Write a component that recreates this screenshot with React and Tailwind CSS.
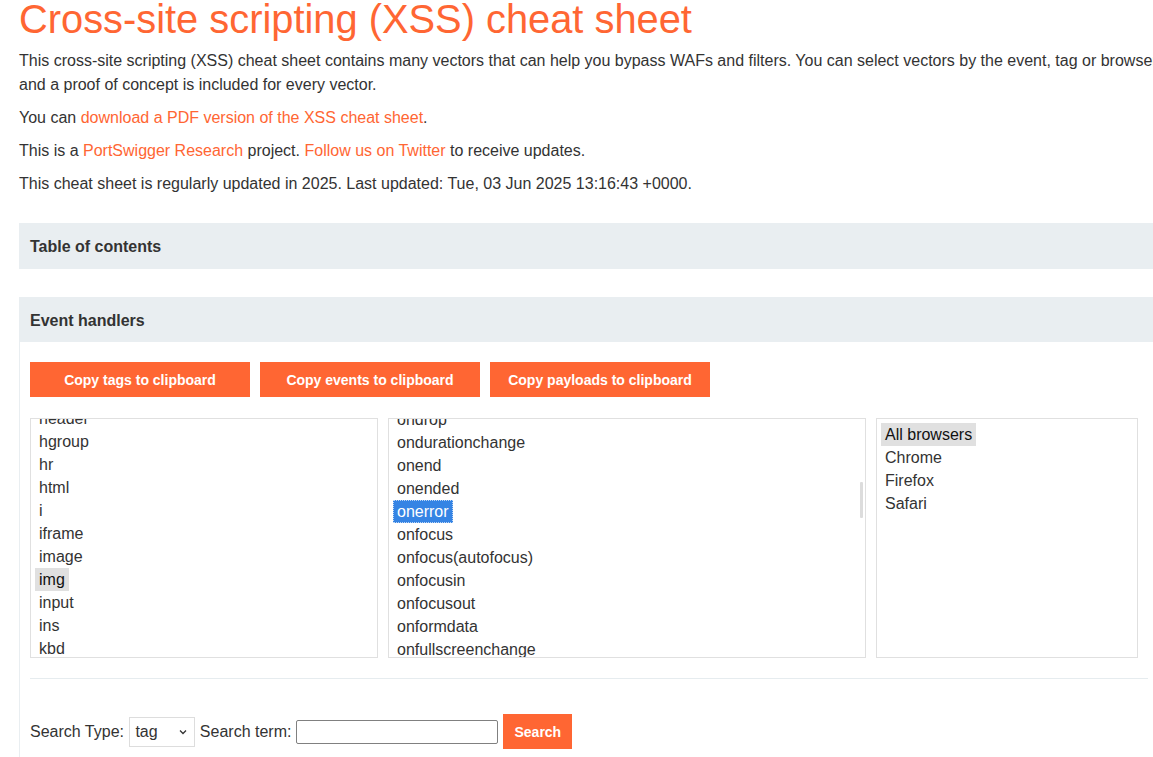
import React from "react";

const font = { fontFamily: '"Liberation Sans", Arial, sans-serif' };

function ListBox({ width, items, selected, selectedStyle, offsetClass, scrollbar }) {
  return (
    <div
      className={`relative h-[240px] ${width} border border-[#e0e0e0] overflow-hidden bg-white shrink-0`}
    >
      <div className={`${offsetClass} px-[4px]`}>
        {items.map((it, i) => (
          <div key={it} className="h-[23px] leading-[23px] text-[16px] whitespace-nowrap">
            {i === selected ? (
              selectedStyle === "blue" ? (
                <span className="inline-block px-[4px] bg-[#3584e4] text-white outline-1 outline-dotted outline-[#bcd6f5] -outline-offset-1">
                  {it}
                </span>
              ) : (
                <span className="inline-block px-[4px] bg-[#e0e0e0] text-[#111]">{it}</span>
              )
            ) : (
              <span className="inline-block px-[4px] text-[#333]">{it}</span>
            )}
          </div>
        ))}
      </div>
      {scrollbar && (
        <div className="absolute right-[2px] top-[63px] w-[3px] h-[36px] bg-[#dcdcdc] rounded-[1px]" />
      )}
    </div>
  );
}

function OrangeButton({ children }) {
  return (
    <button className="w-[220px] h-[35px] pt-[2px] bg-[#ff6633] text-white text-[14px] font-bold flex items-center justify-center">
      {children}
    </button>
  );
}

export default function App() {
  const tags = ["header", "hgroup", "hr", "html", "i", "iframe", "image", "img", "input", "ins", "kbd", "keygen"];
  const events = [
    "ondrop",
    "ondurationchange",
    "onend",
    "onended",
    "onerror",
    "onfocus",
    "onfocus(autofocus)",
    "onfocusin",
    "onfocusout",
    "onformdata",
    "onfullscreenchange",
    "onhashchange",
  ];
  const browsers = ["All browsers", "Chrome", "Firefox", "Safari"];

  return (
    <div className="w-[1153px] h-[757px] overflow-hidden bg-white text-[#333]" style={font}>
      <div className="w-[1159px] pl-[19px]">
        <h1 className="text-[39.85px] leading-[38px] text-[#ff6633] font-normal whitespace-nowrap">
          Cross-site scripting (XSS) cheat sheet
        </h1>
        <div className="mt-[11px] text-[16px] leading-[24px] w-[1140px]">
          <p className="mb-[9px]">
            This cross-site scripting (XSS) cheat sheet contains many vectors that can help you bypass WAFs and
            filters. You can select vectors by the event, tag or browser and a proof of concept is included for
            every vector.
          </p>
          <p className="mb-[9px]">
            You can <a className="text-[#ff6633]">download a PDF version of the XSS cheat sheet</a>.
          </p>
          <p className="mb-[9px]">
            This is a <a className="text-[#ff6633]">PortSwigger Research</a> project.{" "}
            <a className="text-[#ff6633]">Follow us on Twitter</a> to receive updates.
          </p>
          <p>This cheat sheet is regularly updated in 2025. Last updated: Tue, 03 Jun 2025 13:16:43 +0000.</p>
        </div>

        <div className="mt-[27px] w-[1140px] h-[46px] pt-[2px] bg-[#e9eef1] flex items-center px-[11px] text-[16px] font-bold">
          Table of contents
        </div>

        <div className="mt-[28px] w-[1140px]">
          <div className="h-[45px] pt-[2px] bg-[#e9eef1] flex items-center px-[11px] text-[16px] font-bold">
            Event handlers
          </div>
          <div className="border-l border-r border-[#e9eef1] px-[10px] pt-[20px] pb-[20px]">
            <div className="flex gap-[10px]">
              <OrangeButton>Copy tags to clipboard</OrangeButton>
              <OrangeButton>Copy events to clipboard</OrangeButton>
              <OrangeButton>Copy payloads to clipboard</OrangeButton>
            </div>
            <div className="mt-[21px] flex gap-[10px]">
              <ListBox width="w-[348px]" items={tags} selected={7} selectedStyle="gray" offsetClass="-mt-[12px]" />
              <ListBox
                width="w-[478px]"
                items={events}
                selected={4}
                selectedStyle="blue"
                offsetClass="-mt-[11px]"
                scrollbar
              />
              <ListBox width="w-[262px]" items={browsers} selected={0} selectedStyle="gray" offsetClass="pt-[4px]" />
            </div>
            <div className="mt-[20px] h-px bg-[#e6ecef]" />
            <div className="mt-[35px] flex items-center gap-[4.45px] text-[16px]">
              <span>Search Type:</span>
              <div className="ml-[1px] w-[66px] h-[30px] border border-[#dddddd] flex items-center justify-between pl-[5px] pr-[6px] bg-white">
                <span>tag</span>
                <svg width="10" height="10" viewBox="0 0 10 10" fill="none">
                  <path d="M2 3.5 L5 6.5 L8 3.5" stroke="#333" strokeWidth="1.3" />
                </svg>
              </div>
              <span>Search term:</span>
              <input
                type="text"
                className="w-[202px] h-[24px] border border-[#808080] rounded-[2px] bg-white outline-none"
              />
              <button className="ml-[1px] w-[69px] h-[35px] pt-[2px] bg-[#ff6633] text-white text-[14px] font-bold">
                Search
              </button>
            </div>
          </div>
        </div>
      </div>
    </div>
  );
}
